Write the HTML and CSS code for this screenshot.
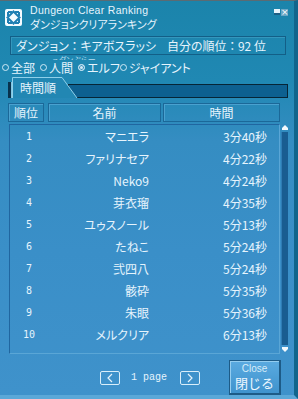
FILE: index.html
```html
<!DOCTYPE html>
<html lang="ja">
<head>
  <meta charset="UTF-8">
  <title>Dungeon Clear Ranking</title>
  <link rel="stylesheet" href="styles.css">
</head>
<body>
  <div class="window">
    <div class="titlebar">
      <svg class="logo" width="17" height="17" viewBox="0 0 17 17">
        <rect x="0" y="0" width="17" height="17" rx="2" fill="#f4fbff"/>
        <path d="M8.5 2.5 L14.5 8.5 L8.5 14.5 L2.5 8.5 Z" fill="none" stroke="#1f7fb3" stroke-width="2"/>
        <path d="M3 3 H7 M3 3 V7 M14 3 H10 M14 3 V7 M3 14 H7 M3 14 V10 M14 14 H10 M14 14 V10" stroke="#1f7fb3" stroke-width="2"/>
        <rect x="7" y="7" width="3" height="3" fill="#f4fbff"/>
      </svg>
      <div class="titles">
        <div class="title-en">Dungeon Clear Ranking</div>
        <div class="title-jp">ダンジョンクリアランキング</div>
      </div>
      <div class="win-buttons">
        <span class="win-min"></span>
        <span class="win-close">×</span>
      </div>
    </div>

    <div class="info">
      <span class="info-dungeon">ダンジョン ： キアボスラッシ</span>
      <span class="info-rank">自分の順位 ： 92 位</span>
    </div>
    <div class="ghost"><span>ュダンぶらー</span></div>

    <div class="radios">
      <span class="radio"><i class="dot"></i>全部</span>
      <span class="radio"><i class="dot"></i>人間</span>
      <span class="radio"><i class="dot on"></i>エルフ</span>
      <span class="radio"><i class="dot"></i>ジャイアント</span>
    </div>

    <div class="tabs">
      <span class="tab-mark"></span>
      <div class="tab">
        <svg class="tab-shape" width="66" height="21" viewBox="0 0 66 21">
          <path d="M0.5 21 V0.5 H50 L65 21" fill="#2287b3" stroke="#8fd0ea" stroke-width="1"/>
        </svg>
        <span class="tab-label">時間順</span>
      </div>
      <div class="tab-bar"></div>
    </div>

    <div class="head-row">
      <div class="head-cell c-rank">順位</div>
      <div class="head-cell c-name">名前</div>
      <div class="head-cell c-time">時間</div>
    </div>

    <div class="list-area">
      <div class="list" id="list"></div>
      <div class="scrollbar">
        <span class="arrow up"></span>
        <span class="track"></span>
        <span class="arrow down"></span>
      </div>
    </div>

    <div class="footer">
      <span class="page-btn">
        <svg width="10" height="10" viewBox="0 0 10 10"><polyline points="7,1 3,5 7,9" fill="none" stroke="#e4f3fc" stroke-width="1.2"/></svg>
      </span>
      <span class="page-label">1 page</span>
      <span class="page-btn">
        <svg width="10" height="10" viewBox="0 0 10 10"><polyline points="3,1 7,5 3,9" fill="none" stroke="#e4f3fc" stroke-width="1.2"/></svg>
      </span>
      <button class="close-btn">
        <span class="close-en">Close</span>
        <span class="close-jp">閉じる</span>
      </button>
    </div>
  </div>

  <script>
    // ranking rows for the current page
    const ranking = [
      ['1', 'マニエラ', '3分40秒'],
      ['2', 'ファリナセア', '4分22秒'],
      ['3', 'Neko9', '4分24秒'],
      ['4', '芽衣瑠', '4分35秒'],
      ['5', 'ユゥスノール', '5分13秒'],
      ['6', 'たねこ', '5分24秒'],
      ['7', '弐四八', '5分24秒'],
      ['8', '骸砕', '5分35秒'],
      ['9', '朱眼', '5分36秒'],
      ['10', 'メルクリア', '6分13秒']
    ];

    const list = document.getElementById('list');
    ranking.forEach(([rank, name, time]) => {
      const row = document.createElement('div');
      row.className = 'row';
      row.innerHTML = `
        <span class="r-rank">${rank}</span>
        <span class="r-name">${name}</span>
        <span class="r-time">${time}</span>
      `;
      list.appendChild(row);
    });
  </script>
</body>
</html>
```

FILE: styles.css
```css
body {
  margin: 0;
  padding: 0;
  width: 298px;
  height: 399px;
  overflow: hidden;
  font-family: "Noto Sans CJK JP", "Noto Sans", sans-serif;
  font-feature-settings: "palt";
  color: #e6f4fd;
}

.window {
  width: 298px;
  height: 399px;
  box-sizing: border-box;
  border-top: 1px solid #5b6b73;
  border-right: 4px solid #11658c;
  border-bottom: 4px solid #5ba8d8;
  background: linear-gradient(#1b84ab 0, #2088b3 80px, #358dc2 140px, #3a8fc8 250px, #3f92cb 100%);
  display: flex;
  flex-direction: column;
}

/* title */
.titlebar {
  height: 35px;
  display: flex;
  padding-left: 5px;
  box-sizing: border-box;
}
.logo {
  margin-top: 8px;
  flex-shrink: 0;
}
.titles {
  margin-left: 8px;
  margin-top: 4px;
}
.title-en {
  font-family: "Liberation Sans", sans-serif;
  font-size: 10.5px;
  line-height: 11px;
  letter-spacing: 0.3px;
}
.title-jp {
  font-size: 11px;
  line-height: 15px;
  margin-top: 1px;
}
.win-buttons {
  margin-left: auto;
  margin-right: 6px;
  margin-top: 8px;
  display: flex;
  gap: 1px;
  height: 7px;
}
.win-min {
  width: 6px;
  height: 6px;
  background: #e8f4fb;
  border-bottom: 2px solid #1d5f85;
  box-sizing: border-box;
}
.win-close {
  width: 7px;
  height: 7px;
  background: #6aa6c4;
  color: #ffffff;
  font-size: 9px;
  line-height: 7px;
  text-align: center;
  font-family: "DejaVu Sans", sans-serif;
}

/* dungeon info */
.info {
  height: 19px;
  margin: 0 8px 0 10px;
  box-sizing: border-box;
  border: 1px solid #135f87;
  box-shadow: inset 1px 1px 0 #3497bd;
  display: flex;
  align-items: center;
  padding-left: 5px;
  font-size: 12px;
  white-space: pre;
}
.info-dungeon {
  width: 151px;
}
.ghost {
  height: 5px;
  overflow: hidden;
  padding-left: 52px;
  font-size: 8px;
  line-height: 5px;
  color: #b5dbee;
}
.ghost span {
  display: block;
  height: 5px;
  padding-top: 2px;
}

/* race filter */
.radios {
  height: 13px;
  display: flex;
  align-items: center;
  padding-left: 2px;
  font-size: 12px;
  margin-top: 1px;
}
.radio {
  display: flex;
  align-items: center;
  gap: 2px;
  margin-right: 5px;
}
.radio:nth-child(3) {
  margin-right: 0;
}
.dot {
  width: 5px;
  height: 5px;
  border: 1px solid #cfe9f6;
  border-radius: 50%;
}
.dot.on {
  background: #cfe9f6;
  box-shadow: inset 0 0 0 1px #3b8fb9;
}

/* tabs */
.tabs {
  height: 21px;
  margin: 3px 6px 0 8px;
  display: flex;
  align-items: flex-end;
}
.tab-mark {
  width: 3px;
  height: 16px;
  background: #08324d;
  border-right: 1px solid #7fc6e2;
}
.tab {
  width: 66px;
  height: 21px;
  position: relative;
  margin-right: -10px;
  z-index: 1;
}
.tab-shape {
  position: absolute;
  left: 0;
  top: 0;
}
.tab-label {
  position: relative;
  display: block;
  padding-left: 8px;
  font-size: 12px;
  line-height: 21px;
}
.tab-bar {
  flex: 1;
  height: 14px;
  box-sizing: border-box;
  background: #0d6090;
  border: 1px solid #062536;
}

/* column heads */
.head-row {
  display: flex;
  margin: 5px 0 0 8px;
  height: 19px;
}
.head-cell {
  box-sizing: border-box;
  border: 1px solid #1b6898;
  box-shadow: inset 1px 1px 0 #4aa1cf;
  font-size: 12px;
  line-height: 17px;
  text-align: center;
}
.c-rank {
  width: 36px;
}
.c-name {
  width: 113px;
  margin-left: 4px;
}
.c-time {
  width: 117px;
  margin-left: 2px;
}

/* ranking list */
.list-area {
  display: flex;
  margin: 2px 0 0 9px;
  height: 230px;
}
.list {
  width: 271px;
  box-sizing: border-box;
  border: 1px solid #2066a0;
  border-right-color: #5aa6d6;
  border-bottom-color: #5aa6d6;
}
.row {
  display: flex;
  align-items: center;
  height: 22px;
  font-size: 12px;
}
.r-rank {
  width: 38px;
  text-align: center;
  font-family: "DejaVu Sans Mono", monospace;
  font-size: 10px;
}
.r-name {
  width: 101px;
  text-align: right;
}
.r-time {
  width: 118px;
  text-align: right;
}
.scrollbar {
  width: 7px;
  margin-left: 1px;
  display: flex;
  flex-direction: column;
  align-items: center;
}
.arrow {
  width: 0;
  height: 0;
  border-left: 3px solid transparent;
  border-right: 3px solid transparent;
}
.arrow.up {
  margin-top: 1px;
  border-bottom: 3px solid #f2f9fd;
  box-shadow: 0 2px 0 #f2f9fd;
}
.arrow.down {
  margin-bottom: 2px;
  border-top: 3px solid #f2f9fd;
  box-shadow: 0 -2px 0 #f2f9fd;
}
.track {
  flex: 1;
  width: 6px;
  margin: 4px 0;
  background: #195d91;
  border-left: 1px solid #2f7cb4;
}

/* paging and close */
.footer {
  display: flex;
  align-items: center;
  height: 35px;
  margin-top: 6px;
  padding-left: 100px;
}
.page-btn {
  width: 20px;
  height: 14px;
  box-sizing: border-box;
  border: 1px solid #d9eefa;
  border-radius: 2px;
  display: flex;
  align-items: center;
  justify-content: center;
}
.page-label {
  font-family: "Liberation Mono", monospace;
  font-size: 10px;
  margin: 0 13px 0 11px;
}
.close-btn {
  margin-left: auto;
  margin-right: 13px;
  width: 52px;
  height: 35px;
  padding: 0;
  box-sizing: border-box;
  background: linear-gradient(#5aaae0, #3f93cd);
  border: 1px solid #1d5b87;
  border-right-width: 2px;
  border-bottom-width: 2px;
  box-shadow: inset 1px 1px 0 #93cdf0;
  color: #eef8ff;
  display: flex;
  flex-direction: column;
  align-items: center;
  justify-content: center;
  font-family: "Noto Sans CJK JP", sans-serif;
}
.close-en {
  font-family: "Liberation Sans", sans-serif;
  font-size: 10px;
  line-height: 12px;
  color: #d6ecf8;
}
.close-jp {
  font-size: 13px;
  line-height: 16px;
}
```
